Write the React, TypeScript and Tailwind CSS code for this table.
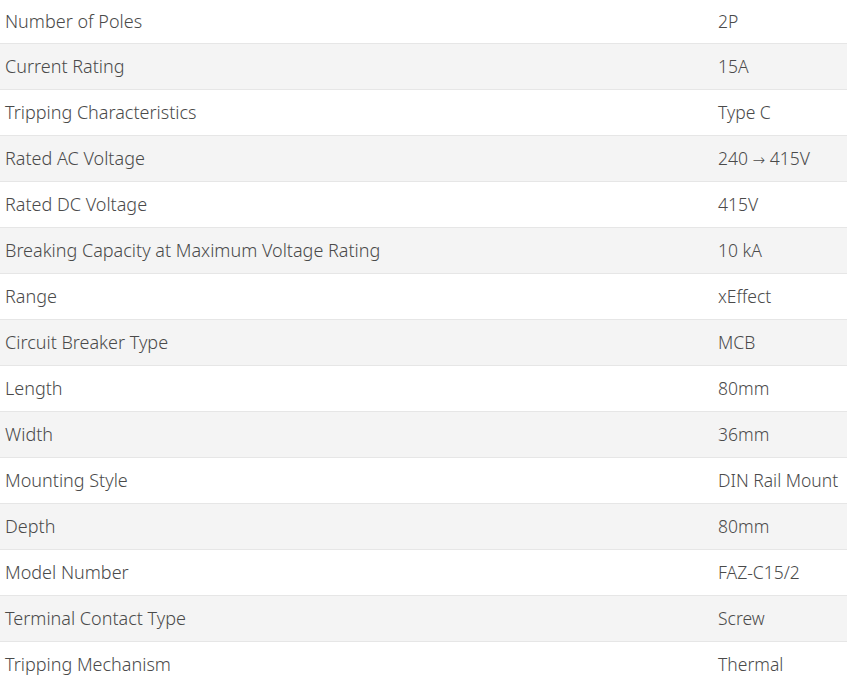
import React from "react";

const rows: [string, React.ReactNode][] = [
  ["Number of Poles", "2P"],
  ["Current Rating", "15A"],
  ["Tripping Characteristics", "Type C"],
  [
    "Rated AC Voltage",
    <>
      240 <span style={{ fontFamily: '"DejaVu Sans", sans-serif' }} className="text-[15px]">→</span> 415V
    </>,
  ],
  ["Rated DC Voltage", "415V"],
  ["Breaking Capacity at Maximum Voltage Rating", "10 kA"],
  ["Range", "xEffect"],
  ["Circuit Breaker Type", "MCB"],
  ["Length", "80mm"],
  ["Width", "36mm"],
  ["Mounting Style", "DIN Rail Mount"],
  ["Depth", "80mm"],
  ["Model Number", "FAZ-C15/2"],
  ["Terminal Contact Type", "Screw"],
  ["Tripping Mechanism", "Thermal"],
];

export default function App() {
  return (
    <div
      className="w-[847px] h-[682px] overflow-hidden bg-white text-[18px] font-light text-[#4a4a4a]"
      style={{ fontFamily: '"Noto Sans", "Open Sans", sans-serif' }}
    >
      {rows.map(([k, v], i) => (
        <div
          key={k}
          className={`flex items-center border-b border-[#e6e6e6] ${
            i === 0 ? "h-[44px]" : "h-[46px]"
          } ${i % 2 === 1 ? "bg-[#f4f4f4]" : "bg-white"}`}
        >
          <div className="w-[718px] pl-[5px]">{k}</div>
          <div className="flex-1 whitespace-nowrap text-[17.5px]">{v}</div>
        </div>
      ))}
    </div>
  );
}
